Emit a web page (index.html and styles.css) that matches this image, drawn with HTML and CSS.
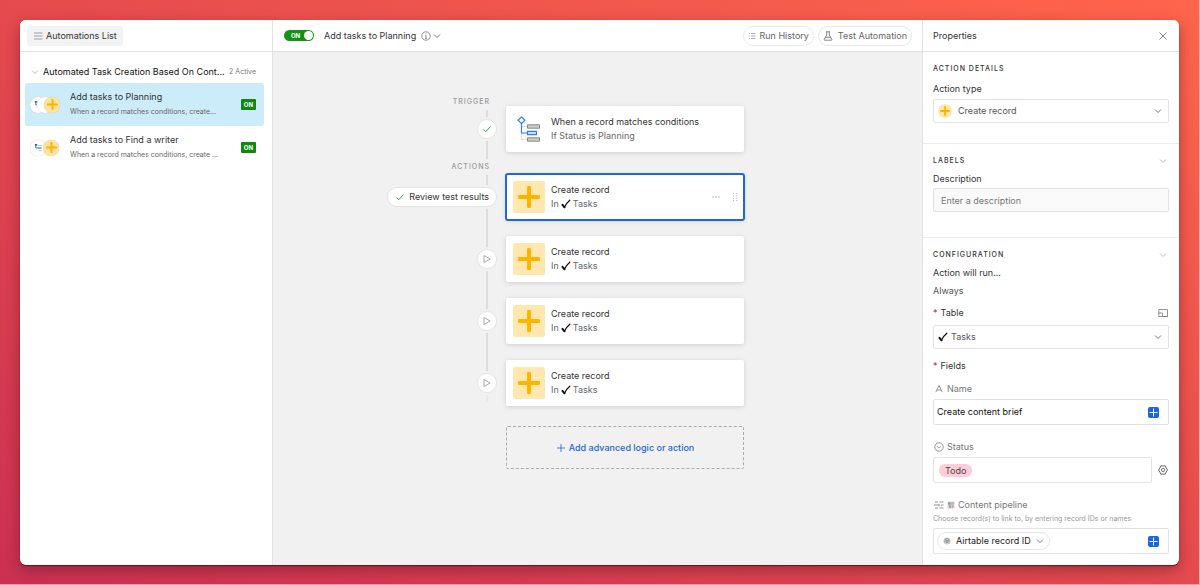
FILE: index.html
```html
<!DOCTYPE html>
<html lang="en">
<head>
<meta charset="utf-8">
<meta name="viewport" content="width=device-width, initial-scale=1">
<title>Automations</title>
<link rel="stylesheet" href="styles.css">
</head>
<body>
<svg class="sprite" aria-hidden="true">
  <symbol id="chevron" viewBox="0 0 8 8"><path d="M1 2.500 4 5.500 7 2.500" fill="none" stroke="currentColor"/></symbol>
  <symbol id="plus" viewBox="0 0 20 20"><path d="M10 1.500v17M1.500 10h17" fill="none" stroke="#fcb400" stroke-width="3.600" stroke-linecap="round"/></symbol>
  <symbol id="heavy-check" viewBox="0 0 10 10"><path d="M1.500 5.800 3.500 8.300" fill="none" stroke="#111" stroke-width="2" stroke-linecap="round"/><path d="M3.500 8.300C4.800 5.300 6.500 3 8.800 1.200" fill="none" stroke="#111" stroke-width="1.300" stroke-linecap="round"/></symbol>
  <symbol id="play" viewBox="0 0 10 10"><path d="M2 1.500v7L8.200 5Z" fill="none" stroke="#aaa" stroke-linejoin="round"/></symbol>
  <symbol id="check" viewBox="0 0 10 10"><path d="M1.500 5.500 3.800 7.700 8.500 2.500" fill="none" stroke="#35a04a"/></symbol>
  <symbol id="tree-mini" viewBox="0 0 10 10"><path d="M2 2v3.500h3" fill="none" stroke="#2468c9"/><path d="M1 1h2.500v2H1z" fill="#2468c9"/><path d="M4.500 2.800H9M5 8.500h4" stroke="#bbb"/><path d="M4.500 5.600H8.500" stroke="#5b95e8" stroke-width="1.500"/></symbol>
  <symbol id="tree" viewBox="0 0 24 26">
    <path d="M4.500 10.500H10M4.500 17v6.500H10" fill="none" stroke="#ddd"/>
    <path d="M4.500 7v10H10" fill="none" stroke="#2d7ff9" stroke-width="1.200"/>
    <path d="M4.500 1 8 4.200 4.500 7.400 1 4.200Z" fill="#fff" stroke="#2d7ff9" stroke-width="1.200"/>
    <path d="M10.500 8.800h12v3.400h-12zM10.500 21.800h12v3.400h-12z" fill="#ccc" stroke="#888"/>
    <path d="M10.500 15.300h9v3.400h-9z" fill="#cfdfff" stroke="#2d7ff9" stroke-width="1.200"/>
  </symbol>
</svg>

<main class="window">
  <aside class="sidebar">
    <header class="bar sidebar-bar">
      <button class="list-button"><svg class="icon-md" viewBox="0 0 10 10"><path d="M1 2h8.500M1 5h8.500M1 8h8.500" stroke="#888" stroke-width=".8" fill="none"/></svg>Automations List</button>
    </header>
    <div class="group-head">
      <svg class="icon-sm muted"><use href="#chevron"/></svg>
      <h2 class="group-title">Automated Task Creation Based On Cont...</h2>
      <span class="group-count">2 Active</span>
    </div>
    <ul class="automations">
      <li class="automation automation-active">
        <span class="avatars"><span class="avatar"><svg class="avatar-tree"><use href="#tree-mini"/></svg></span><span class="avatar"></span><span class="avatar avatar-plus"><svg class="plus-sm"><use href="#plus"/></svg></span></span>
        <div class="automation-text"><h3>Add tasks to Planning</h3><p>When a record matches conditions, create...</p></div>
        <span class="badge">ON</span>
      </li>
      <li class="automation">
        <span class="avatars avatars-pair"><span class="avatar"><svg class="avatar-tree"><use href="#tree-mini"/></svg></span><span class="avatar avatar-plus"><svg class="plus-sm"><use href="#plus"/></svg></span></span>
        <div class="automation-text"><h3>Add tasks to Find a writer</h3><p>When a record matches conditions, create ...</p></div>
        <span class="badge">ON</span>
      </li>
    </ul>
  </aside>

  <section class="editor">
    <header class="bar editor-bar">
      <label class="switch"><input type="checkbox" role="switch" checked aria-label="Automation on"><span>ON</span></label>
      <h1 class="title">Add tasks to Planning</h1>
      <svg class="icon-md dim" viewBox="0 0 10 10"><circle cx="5" cy="5" r="4.200" fill="none" stroke="currentColor" stroke-width=".8"/><path d="M5 4.500v2.800M4.200 4.600H5M4.100 7.300h1.900M5 2.400v1" stroke="currentColor" stroke-width=".8" fill="none"/></svg>
      <svg class="icon-sm dim"><use href="#chevron"/></svg>
      <div class="actions">
        <button class="pill"><svg class="icon-sm" viewBox="0 0 8 8"><path d="M1 1.500h1M3 1.500h4.500M1 4h1M3 4h4.500M1 6.500h1M3 6.500h4.500" stroke="#888" stroke-width=".7"/></svg>Run History</button>
        <button class="pill"><svg class="icon-md" viewBox="0 0 10 10"><path d="M3 .8h4M3.700 1v3L1.200 8.300q-.3.900.6.900h6.400q.9 0 .6-.9L6.300 4V1M2.500 6.300h5" fill="none" stroke="#666" stroke-width=".8"/></svg>Test Automation</button>
      </div>
    </header>
    <div class="canvas">
      <div class="rail">
        <span class="rail-label">TRIGGER</span>
        <i class="line line-xs"></i>
        <span class="node"><svg class="icon-md"><use href="#check"/></svg></span>
        <i class="line line-md"></i>
        <span class="rail-label">ACTIONS</span>
        <i class="line line-sm"></i>
        <button class="review"><svg class="icon-md"><use href="#check"/></svg>Review test results</button>
        <i class="line line-lg"></i>
        <button class="node" aria-label="Run step 2"><svg class="icon-md"><use href="#play"/></svg></button>
        <i class="line line-lg"></i>
        <button class="node" aria-label="Run step 3"><svg class="icon-md"><use href="#play"/></svg></button>
        <i class="line line-lg"></i>
        <button class="node" aria-label="Run step 4"><svg class="icon-md"><use href="#play"/></svg></button>
        <i class="line line-xs line-end"></i>
      </div>
      <div class="cards">
        <article class="card card-trigger">
          <span class="tile"><svg class="tile-tree"><use href="#tree"/></svg></span>
          <div class="card-text"><h3>When a record matches conditions</h3><p>If Status is Planning</p></div>
        </article>
        <article class="card card-selected">
          <span class="tile tile-plus"><svg class="plus-lg"><use href="#plus"/></svg></span>
          <div class="card-text"><h3>Create record</h3><p>In <svg class="icon-md"><use href="#heavy-check"/></svg> Tasks</p></div>
          <button class="ghost" aria-label="More"><svg class="icon-sm" viewBox="0 0 8 8"><path d="M.5 4h1.300M3.400 4h1.300M6.200 4h1.300" stroke="#999"/></svg></button>
          <button class="ghost" aria-label="Drag"><svg class="icon-sm" viewBox="0 0 8 8"><path d="M2 .5h1M5 .5h1M2 2.800h1M5 2.800h1M2 5.100h1M5 5.100h1M2 7.400h1M5 7.400h1" stroke="#aaa" stroke-width=".8"/></svg></button>
        </article>
        <article class="card">
          <span class="tile tile-plus"><svg class="plus-lg"><use href="#plus"/></svg></span>
          <div class="card-text"><h3>Create record</h3><p>In <svg class="icon-md"><use href="#heavy-check"/></svg> Tasks</p></div>
        </article>
        <article class="card">
          <span class="tile tile-plus"><svg class="plus-lg"><use href="#plus"/></svg></span>
          <div class="card-text"><h3>Create record</h3><p>In <svg class="icon-md"><use href="#heavy-check"/></svg> Tasks</p></div>
        </article>
        <article class="card">
          <span class="tile tile-plus"><svg class="plus-lg"><use href="#plus"/></svg></span>
          <div class="card-text"><h3>Create record</h3><p>In <svg class="icon-md"><use href="#heavy-check"/></svg> Tasks</p></div>
        </article>
        <button class="add"><svg class="icon-md" viewBox="0 0 10 10"><path d="M5 1v8M1 5h8" stroke="currentColor" stroke-width=".8"/></svg>Add advanced logic or action</button>
      </div>
    </div>
  </section>

  <aside class="properties">
    <header class="bar properties-bar">
      <h2 class="title">Properties</h2>
      <button class="ghost" aria-label="Close"><svg class="icon-md" viewBox="0 0 10 10"><path d="m1.500 1.500 7 7m0-7-7 7" stroke="#666" stroke-width=".8"/></svg></button>
    </header>
    <section class="panel">
      <h3 class="heading heading-roomy">ACTION DETAILS</h3>
      <label class="label" for="type">Action type</label>
      <div class="picker">
        <select id="type" class="picker-wide"><option>Create record</option></select>
        <span class="picker-icon picker-plus"><svg class="icon-md"><use href="#plus"/></svg></span>
        <svg class="icon-sm picker-chevron"><use href="#chevron"/></svg>
      </div>
    </section>
    <section class="panel">
      <h3 class="heading">LABELS<svg class="icon-sm muted"><use href="#chevron"/></svg></h3>
      <label class="label" for="description">Description</label>
      <input id="description" class="description" placeholder="Enter a description">
    </section>
    <section class="panel">
      <h3 class="heading">CONFIGURATION<svg class="icon-sm muted"><use href="#chevron"/></svg></h3>
      <p class="label">Action will run...</p>
      <p class="always">Always</p>
      <div class="label-row">
        <label class="label" for="table"><span class="required">*</span>Table</label>
        <svg class="icon-md dim" viewBox="0 0 10 10"><path d="M.8 1.500h8.700v7H5.500M.8 1.500v7M.8 5h3.700v3.500H.8M4.500 8.500h5" fill="none" stroke="currentColor" stroke-width=".8"/></svg>
      </div>
      <div class="picker">
        <select id="table"><option>Tasks</option></select>
        <svg class="icon-md picker-icon"><use href="#heavy-check"/></svg>
        <svg class="icon-sm picker-chevron"><use href="#chevron"/></svg>
      </div>
      <p class="label fields"><span class="required">*</span>Fields</p>
      <label class="field-name" for="name"><svg class="icon-md" viewBox="0 0 10 10"><path d="M1.800 8.200 5 1.500l3.200 6.700M3 6h4" fill="none" stroke="currentColor" stroke-width=".8"/></svg>Name</label>
      <div class="box">
        <input id="name" class="name-input" value="Create content brief">
        <button class="insert" aria-label="Insert value"><svg viewBox="0 0 11 11"><path d="M5.500 1.500v8M1.500 5.500h8" stroke="#fff"/></svg></button>
      </div>
      <p class="field-name field-next"><svg class="icon-md" viewBox="0 0 10 10"><circle cx="5" cy="5" r="4.200" fill="none" stroke="currentColor" stroke-width=".8"/><path d="M3 4.200 5 6.200l2-2" fill="none" stroke="currentColor" stroke-width=".8"/></svg>Status</p>
      <div class="status-row">
        <div class="box"><span class="tag">Todo</span></div>
        <button class="ghost" aria-label="Status settings"><svg class="icon-md" viewBox="0 0 10 10"><path d="M2.700.9h4.600L8 2.700l1.500 2.300L8 7.300l-.7 1.800H2.700L2 7.300.5 5 2 2.700Z" fill="none" stroke="#555" stroke-width=".9" stroke-linejoin="round"/><circle cx="5" cy="5" r="1.600" fill="none" stroke="#555" stroke-width=".8"/></svg></button>
      </div>
      <p class="field-name field-next"><svg class="icon-md" viewBox="0 0 10 10"><path d="M1 2h3M5.500 2h4M0 5h5.500M7 5h2.500M1 8h3M5.500 8h4" fill="none" stroke="currentColor" stroke-width=".8"/><path d="M4.200 3.800 5.500 5 4.200 6.200" fill="none" stroke="currentColor" stroke-width=".6"/></svg><svg class="icon-sm" viewBox="0 0 8 8"><rect x=".5" y=".5" width="7" height="7" rx="1" fill="#dccfd4"/><path d="M1 1.200h2.600v2.600H1z" fill="#6fb58a"/><path d="M4.300 1.500h2.500v2H4.300z" fill="#b5ae91"/><path d="M2 4.500h2v2.300H2z" fill="#c98099"/><path d="M4.800 4.500h1.700v2H4.800z" fill="#8fae92"/></svg>Content pipeline</p>
      <p class="hint">Choose record(s) to link to, by entering record IDs or names</p>
      <div class="box">
        <button class="token"><svg class="icon-sm" viewBox="0 0 8 8"><circle cx="4" cy="4" r="3.500" fill="#ccc"/><path d="M2 5V3.500a2 2 0 0 1 4 0V5M3.300 6V4a.7.7 0 0 1 1.400 0v2" fill="none" stroke="#777" stroke-width=".6"/></svg>Airtable record ID<svg class="icon-sm dim"><use href="#chevron"/></svg></button>
        <button class="insert" aria-label="Insert record"><svg viewBox="0 0 11 11"><path d="M5.500 1.500v8M1.500 5.500h8" stroke="#fff"/></svg></button>
      </div>
    </section>
  </aside>
</main>
</body>
</html>
```
FILE: styles.css
```css
* { box-sizing: border-box; }
body {
  margin: 0;
  min-height: 100vh;
  display: flex;
  padding: 20px 20px 19px;
  border-right: 1px solid #ffb9ac;
  border-bottom: 1px solid #f29aa8;
  background: linear-gradient(to top right, #cb3052, #ff654b);
  font: 9px/14px Inter, "Liberation Sans", sans-serif;
  color: #333;
}
h1, h2, h3, p, ul { margin: 0; padding: 0; font-size: inherit; font-weight: inherit; }
ul { list-style: none; }
button, input, select { font: inherit; color: inherit; margin: 0; }
button { padding: 0; border: 0; background: none; cursor: pointer; }
svg { flex: none; }
.sprite { position: absolute; width: 0; height: 0; }
.icon-sm { width: 8px; height: 8px; }
.icon-md { width: 10px; height: 10px; }
.muted { color: #bbb; }
.dim { color: #777; }

.window {
  flex: 1;
  display: grid;
  grid-template-columns: 252px minmax(0, 1fr) 256px;
  overflow: hidden;
  border-radius: 6px;
  background: #fff;
  box-shadow: 0 1px 1px rgba(90, 0, 10, .7), 0 5px 14px rgba(80, 20, 30, .45);
}
.bar {
  display: flex;
  align-items: center;
  height: 32px;
  border-bottom: 1px solid #e2e2e2;
  background: #fff;
}

.sidebar-bar { padding: 0 7px; }
.list-button {
  display: flex;
  align-items: center;
  gap: 3px;
  height: 20px;
  padding: 0 6px;
  border-radius: 3px;
  background: #f3f3f3;
}
.group-head {
  display: flex;
  align-items: center;
  gap: 4px;
  padding: 13px 16px 4px 11px;
  white-space: nowrap;
}
.group-title { flex: 1; color: #111; }
.group-count { font-size: 7px; color: #777; }
.automations { padding: 0 8px 0 5px; }
.automation {
  display: flex;
  align-items: center;
  height: 43px;
  padding: 0 8px 0 5px;
  border-radius: 3px;
}
.automation-active { background: #cdecf9; }
.automation-text { flex: 1; margin-left: 10px; white-space: nowrap; }
.automation-text p { font-size: 7px; line-height: 15px; color: #666; }
.avatars { display: flex; width: 30px; }
.avatar {
  display: grid;
  place-items: center;
  width: 16px;
  height: 16px;
  border-radius: 8px;
  background: #fff;
  box-shadow: 0 0 1px #bbb;
}
.avatar + .avatar { margin-left: -9px; }
.avatars-pair .avatar + .avatar { margin-left: -3px; }
.avatar-plus { background: #ffe3a0; }
.avatar-tree { width: 9px; height: 9px; }
.plus-sm { width: 11px; height: 11px; }
.badge {
  padding: 0 3px;
  border-radius: 1px;
  background: #0f8a0f;
  color: #fff;
  font-size: 6px;
  font-weight: 700;
  line-height: 11px;
}

.editor { display: flex; flex-direction: column; border: solid #e2e2e2; border-width: 0 1px; background: #f1f1f1; }
.editor-bar { padding: 0 10px 0 11px; }
.switch { display: grid; align-items: center; margin-right: 10px; }
.switch > * { grid-area: 1 / 1; }
.switch input {
  appearance: none;
  display: flex;
  justify-content: flex-end;
  width: 30px;
  height: 11px;
  padding: 1px;
  border-radius: 6px;
  background: #159215;
}
.switch input::after { content: ""; width: 9px; height: 9px; border-radius: 5px; background: #fff; }
.switch span { padding-left: 7px; color: #fff; font-size: 6px; font-weight: 700; }
.title { margin-right: 5px; }
.editor-bar .icon-md { margin-right: 2px; }
.actions { display: flex; gap: 4px; margin-left: auto; }
.pill {
  display: flex;
  align-items: center;
  gap: 3px;
  height: 20px;
  padding: 0 4px;
  border: 1px solid #e9e9e9;
  border-radius: 10px;
  color: #666;
}

.canvas {
  display: grid;
  grid-template-columns: minmax(0, 233fr) 238px minmax(0, 178fr);
  padding: 43px 0 90px;
}
.rail { display: flex; flex-direction: column; align-items: flex-end; gap: 2px; padding: 1px 9px 0 0; }
.rail-label { margin-right: 7px; color: #999; font-size: 7px; font-weight: 500; line-height: 12px; letter-spacing: 1px; }
.line { width: 2px; margin-right: 9px; background: #ddd; }
.line-xs { height: 7px; }
.line-sm { height: 10px; }
.line-md { height: 18px; }
.line-lg { height: 38px; }
.line-end { background: #e9e9e9; }
.node, .review {
  display: flex;
  align-items: center;
  justify-content: center;
  height: 20px;
  min-width: 20px;
  border: 1px solid #e4e4e4;
  border-radius: 10px;
  background: #fff;
}
.review { gap: 4px; padding: 0 7px; }
.cards { display: flex; flex-direction: column; gap: 16px; padding-top: 11px; }
.card {
  display: flex;
  align-items: center;
  height: 46px;
  padding: 0 5px 0 7px;
  border-radius: 2px;
  background: #fff;
  box-shadow: 0 1px 5px rgba(0, 0, 0, .14);
}
.card-trigger { margin-bottom: 6px; }
.card-selected { outline: 2px solid #1f66dc; outline-offset: -1px; }
.card-selected .ghost { margin-left: 11px; }
.card-text { flex: 1; margin-left: 6px; }
.card-text p { display: flex; align-items: center; gap: 2px; color: #666; }
.tile { display: grid; place-items: center; width: 32px; height: 32px; border-radius: 2px; }
.tile-plus { background: #ffe7b0; }
.tile-tree { width: 24px; height: 26px; }
.plus-lg { width: 22px; height: 22px; }
.ghost { display: flex; }
.add {
  display: flex;
  align-items: center;
  justify-content: center;
  gap: 3px;
  height: 43px;
  margin-top: 4px;
  border: 1px dashed #aaa;
  border-radius: 2px;
  color: #1f66cc;
  font-weight: 500;
}

.properties { min-width: 0; }
.properties-bar { justify-content: space-between; padding: 0 11px 0 10px; }
.panel { padding: 10px 10px 20px; border-bottom: 1px solid #ececec; }
.panel:last-child { padding-bottom: 10px; border: 0; }
.heading {
  display: flex;
  align-items: center;
  justify-content: space-between;
  margin-bottom: 4px;
  padding-right: 2px;
  font-size: 7px;
  font-weight: 500;
  letter-spacing: 1px;
}
.heading-roomy { margin-bottom: 6px; }
.label { display: block; line-height: 14px; }
.picker { display: grid; align-items: center; margin-top: 3px; }
.picker > * { grid-area: 1 / 1; }
.picker select {
  appearance: none;
  width: 100%;
  height: 24px;
  padding: 0 17px;
  border: 1px solid #e2e2e2;
  border-radius: 2px;
  background: #fff;
  color: #555;
}
.picker .picker-wide { padding-left: 24px; }
.picker-icon { margin-left: 5px; pointer-events: none; }
.picker-plus { display: grid; place-items: center; width: 14px; height: 14px; border-radius: 7px; background: #ffe7b0; }
.picker-chevron { justify-self: end; margin-right: 7px; color: #777; pointer-events: none; }
.description {
  display: block;
  width: 100%;
  height: 24px;
  margin: 2px 0 5px;
  padding: 0 7px;
  border: 1px solid #e2e2e2;
  border-radius: 2px;
  background: #fafafa;
}
.description::placeholder { color: #777; }
.always { margin: 4px 0 8px; color: #555; }
.label-row { display: flex; align-items: center; justify-content: space-between; padding-right: 1px; }
.label-row + .picker { margin-top: 5px; }
.required { margin-right: 3px; color: #c0143c; }
.fields { margin: 10px 0 9px; }
.field-name { display: flex; align-items: center; gap: 3px; margin-bottom: 3px; padding-left: 1px; color: #777; }
.field-next { margin-top: 15px; }
.box {
  flex: 1;
  display: flex;
  align-items: center;
  justify-content: space-between;
  height: 26px;
  padding: 0 9px 0 3px;
  border: 1px solid #e2e2e2;
  border-radius: 2px;
}
.name-input { flex: 1; min-width: 0; padding: 0; border: 0; color: #111; }
.insert { display: flex; border-radius: 2px; background: #1667e0; }
.insert svg { width: 11px; height: 11px; }
.status-row { display: flex; align-items: center; gap: 6px; padding-right: 1px; }
.tag { margin-left: 2px; padding: 0 6px; border-radius: 6px; background: #ffccd9; color: #444; line-height: 13px; }
.hint { margin-bottom: 3px; color: #999; font-size: 7px; line-height: 12px; }
.field-next:has(+ .hint) { margin-bottom: 1px; }
.token {
  display: flex;
  align-items: center;
  gap: 5px;
  height: 18px;
  padding: 0 5px;
  border: 1px solid #e6e6e6;
  border-radius: 9px;
  color: #222;
}
```
